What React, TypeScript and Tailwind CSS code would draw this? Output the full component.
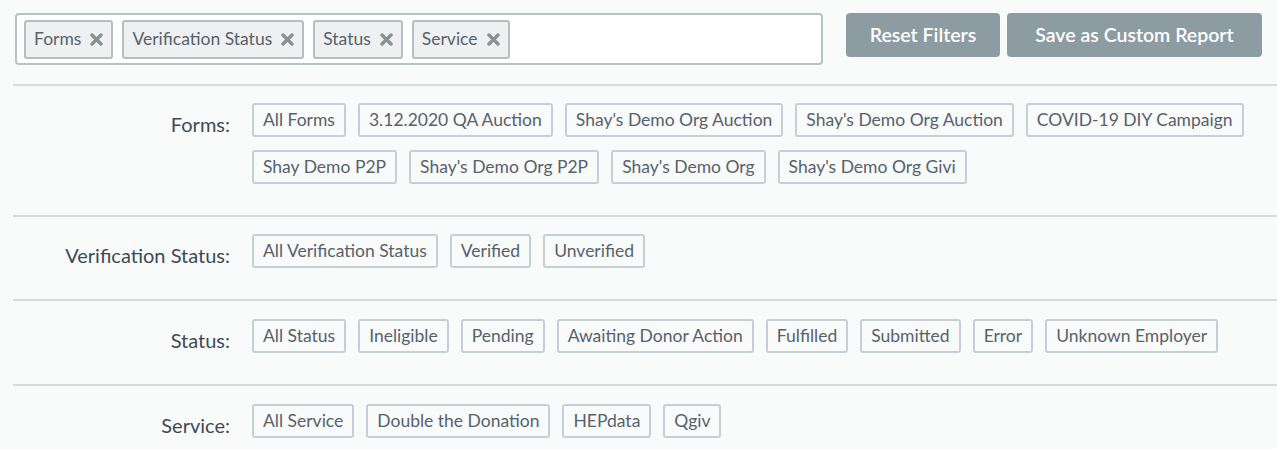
import React from "react";

const sections: { label: string; items: string[] }[] = [
  {
    label: "Forms:",
    items: [
      "All Forms",
      "3.12.2020 QA Auction",
      "Shay's Demo Org Auction",
      "Shay's Demo Org Auction",
      "COVID-19 DIY Campaign",
      "Shay Demo P2P",
      "Shay's Demo Org P2P",
      "Shay's Demo Org",
      "Shay's Demo Org Givi",
    ],
  },
  {
    label: "Verification Status:",
    items: ["All Verification Status", "Verified", "Unverified"],
  },
  {
    label: "Status:",
    items: [
      "All Status",
      "Ineligible",
      "Pending",
      "Awaiting Donor Action",
      "Fulfilled",
      "Submitted",
      "Error",
      "Unknown Employer",
    ],
  },
  {
    label: "Service:",
    items: ["All Service", "Double the Donation", "HEPdata", "Qgiv"],
  },
];

const tags = ["Forms", "Verification Status", "Status", "Service"];

function HeavyX() {
  return (
    <svg width="13" height="13" viewBox="0 0 13 13" className="shrink-0">
      <path
        d="M2 2 L11 11 M11 2 L2 11"
        stroke="#8a9195"
        strokeWidth="3.4"
        strokeLinecap="round"
        fill="none"
      />
    </svg>
  );
}

export default function App() {
  return (
    <div
      className="min-h-screen w-full bg-[#f9fafa] text-[#56626c]"
      style={{ fontFamily: "Lato, 'Open Sans', sans-serif" }}
    >
      <div className="flex items-start pl-[15px] pt-[13px] h-[84px]">
        <div className="w-[808px] h-[52px] bg-white border-2 border-[#b9c1c5] rounded-[4px] flex items-center gap-[9px] pl-[7px]">
          {tags.map((t) => (
            <div
              key={t}
              className="flex items-center gap-[9px] h-[39px] pl-[8px] pr-[8px] bg-[#eef0f1] border-2 border-[#b7bec2] rounded-[3px] text-[17.5px] text-[#56626c]"
            >
              <span>{t}</span>
              <HeavyX />
            </div>
          ))}
        </div>
        <div className="flex gap-[7px] ml-[23px]">
          <button className="w-[154px] h-[44px] rounded-[4px] bg-[#8d9ba3] text-white text-[19.5px] font-semibold">
            Reset Filters
          </button>
          <button className="w-[255px] h-[44px] rounded-[4px] bg-[#8d9ba3] text-white text-[19.5px] font-semibold">
            Save as Custom Report
          </button>
        </div>
      </div>
      <div className="ml-[13px]">
        {sections.map((s, idx) => (
          <div
            key={s.label}
            className={
              idx >= 2
                ? "flex border-t-2 border-[#d3dbdd] pt-[18px] pb-[31px]"
                : "flex border-t-2 border-[#d3dbdd] pt-[17px] pb-[31px]"
            }
          >
            <div className="w-[217px] shrink-0 text-right text-[20px] text-[#3d4a54] pt-[9px] leading-[24px]">
              {s.label}
            </div>
            <div className="flex flex-wrap gap-x-[12px] gap-y-[13px] ml-[22px] flex-1 pr-[10px]">
              {s.items.map((it, i) => (
                <div
                  key={i}
                  className="h-[34px] flex items-center px-[9px] border-2 border-[#c6d0d4] rounded-[3px] text-[17.5px] text-[#56626c]"
                >
                  {it}
                </div>
              ))}
            </div>
          </div>
        ))}
      </div>
    </div>
  );
}
